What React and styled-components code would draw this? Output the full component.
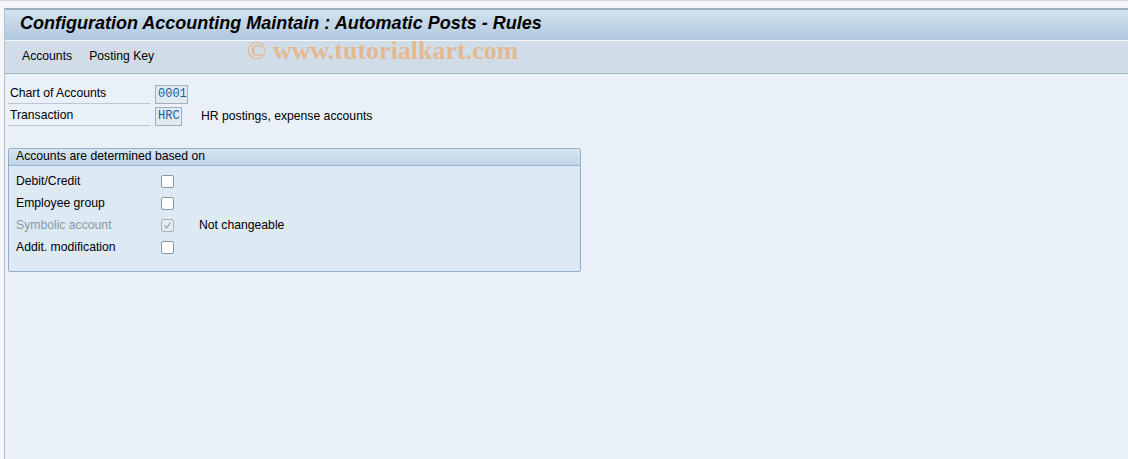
import React from 'react';
import styled, { createGlobalStyle } from 'styled-components';

const GlobalStyle = createGlobalStyle`
  html, body {
    margin: 0;
    padding: 0;
    background: #e9f0f8;
  }

  body {
    font-family: Tahoma, "Liberation Sans", Arial, sans-serif;
    font-size: 12.2px;
    color: #000;
  }
`;

const Page = styled.div`
  width: 1128px;
  height: 459px;
  overflow: hidden;
  display: flex;
  flex-direction: column;
  background: #f4f6f9;
  border-top: 1px solid #d3d8e0;
  box-sizing: border-box;
`;

const Frame = styled.div`
  flex: 1;
  margin-top: 7px;
  margin-left: 4px;
  display: flex;
  flex-direction: column;
  border-left: 1px solid #b4c0cc;
  border-top: 2px solid #9eadbd;
  background: #e9f0f8;
`;

const TitleBar = styled.div`
  height: 31px;
  box-sizing: border-box;
  padding: 0 0 4px 15px;
  display: flex;
  align-items: center;
  background: linear-gradient(to bottom, #d3e2ee 0%, #b0c8de 100%);
  border-bottom: 1px solid #f4f8fb;
`;

const Title = styled.h1`
  margin: 0;
  font-family: Tahoma, "Liberation Sans", Arial, sans-serif;
  font-size: 18px;
  font-weight: bold;
  font-style: italic;
  color: #000;
`;

const Toolbar = styled.div`
  position: relative;
  height: 33px;
  box-sizing: border-box;
  padding: 0 0 2px 17px;
  display: flex;
  align-items: center;
  gap: 17px;
  background: #d0dde8;
  border-bottom: 1px solid #a4b4c4;
`;

const MenuItem = styled.span`
  color: #000;
`;

const Watermark = styled.span`
  position: absolute;
  left: 242px;
  top: -5px;
  font-family: "Liberation Serif", "Times New Roman", serif;
  font-size: 26px;
  font-weight: bold;
  color: rgba(236, 170, 110, 0.72);
  white-space: nowrap;
`;

const Content = styled.div`
  padding: 9px 0 0 3px;
  display: flex;
  flex-direction: column;
`;

const FieldRow = styled.div`
  display: flex;
  align-items: center;
  height: 22px;
`;

const FieldLabel = styled.div`
  width: 142px;
  height: 20px;
  line-height: 19px;
  padding-left: 2px;
  margin-right: 5px;
  border-bottom: 1px solid #bcc7d3;
  box-sizing: border-box;
`;

const InputBox = styled.div`
  width: ${(p) => p.width}px;
  height: 19px;
  line-height: 17px;
  box-sizing: border-box;
  padding-left: 2px;
  border: 1px solid #a2aeba;
  background: #e0eaf3;
  font-family: "Courier New", "Liberation Mono", monospace;
  font-size: 12px;
  color: #1a5aa6;
`;

const FieldDesc = styled.span`
  margin-left: ${(p) => p.offset}px;
`;

const GroupBox = styled.div`
  margin-top: 21px;
  width: 573px;
  height: 124px;
  box-sizing: border-box;
  border: 1px solid #93aecb;
  border-radius: 2px;
  background: #dde9f3;
  display: flex;
  flex-direction: column;
`;

const GroupHeader = styled.div`
  height: 16px;
  line-height: 15px;
  padding-left: 7px;
  background: linear-gradient(to bottom, #d7e5f1 0%, #c0d5e8 100%);
  border-bottom: 1px solid #9ab5cf;
`;

const GroupBody = styled.div`
  padding-top: 4px;
  display: flex;
  flex-direction: column;
`;

const CheckRow = styled.div`
  display: flex;
  align-items: center;
  height: 22px;
  padding-left: 7px;
`;

const CheckLabel = styled.span`
  width: 145px;
  color: ${(p) => (p.disabled ? '#8d98a4' : '#000')};
`;

const CheckBox = styled.span`
  width: 13px;
  height: 13px;
  box-sizing: border-box;
  border: 1px solid ${(p) => (p.disabled ? '#a8b2bc' : '#8898a8')};
  border-radius: 2px;
  background: ${(p) => (p.disabled ? '#e6ebf0' : '#ffffff')};
  display: flex;
  align-items: center;
  justify-content: center;
`;

const CheckNote = styled.span`
  margin-left: 25px;
`;

const rows = [
  { label: 'Debit/Credit' },
  { label: 'Employee group' },
  { label: 'Symbolic account', disabled: true, checked: true, note: 'Not changeable' },
  { label: 'Addit. modification' },
];

const Tick = () => (
  <svg width="9" height="9" viewBox="0 0 9 9">
    <path d="M1.5 4.5 L3.5 7 L7.5 1.5" fill="none" stroke="#9aa4ae" strokeWidth="1.2" />
  </svg>
);

const App = () => (
  <>
    <GlobalStyle />
    <Page>
      <Frame>
        <TitleBar>
          <Title>Configuration Accounting Maintain : Automatic Posts - Rules</Title>
        </TitleBar>
        <Toolbar>
          <MenuItem>Accounts</MenuItem>
          <MenuItem>Posting Key</MenuItem>
          <Watermark>© www.tutorialkart.com</Watermark>
        </Toolbar>
        <Content>
          <FieldRow>
            <FieldLabel>Chart of Accounts</FieldLabel>
            <InputBox width={33}>0001</InputBox>
          </FieldRow>
          <FieldRow>
            <FieldLabel>Transaction</FieldLabel>
            <InputBox width={27}>HRC</InputBox>
            <FieldDesc offset={19}>HR postings, expense accounts</FieldDesc>
          </FieldRow>

          <GroupBox>
            <GroupHeader>Accounts are determined based on</GroupHeader>
            <GroupBody>
              {rows.map((row) => (
                <CheckRow key={row.label}>
                  <CheckLabel disabled={row.disabled}>{row.label}</CheckLabel>
                  <CheckBox disabled={row.disabled}>
                    {row.checked && <Tick />}
                  </CheckBox>
                  {row.note && <CheckNote>{row.note}</CheckNote>}
                </CheckRow>
              ))}
            </GroupBody>
          </GroupBox>
        </Content>
      </Frame>
    </Page>
  </>
);

export default App;
